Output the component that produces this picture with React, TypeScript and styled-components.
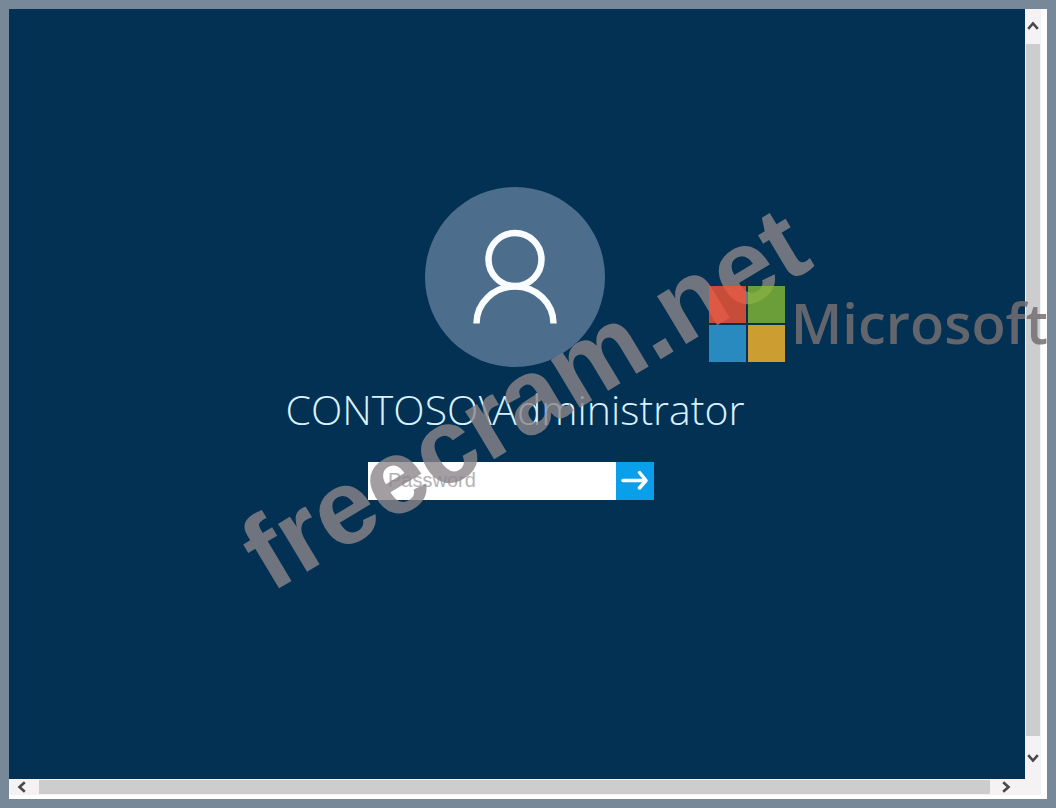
import React from 'react';
import styled, { createGlobalStyle } from 'styled-components';

const GlobalStyle = createGlobalStyle`
  *, *::before, *::after { box-sizing: border-box; }
  html, body, #root { height: 100%; }
  body { margin: 0; background: #778899; font-family: "Open Sans", sans-serif; }
`;

const Frame = styled.div`
  position: relative;
  height: 100%;
  padding: 9px;
  overflow: hidden;
`;

const Viewer = styled.div`
  display: grid;
  grid-template: 1fr 16px / 1fr 16px;
  height: 100%;
  padding: 0 6px 4px 0;
  background: #ffffff;
`;

const Desktop = styled.main`
  display: flex;
  flex-direction: column;
  align-items: center;
  justify-content: center;
  padding: 0 4px 101px 0;
  background: #033153;
`;

const Track = styled.div<{ $vertical?: boolean }>`
  display: flex;
  flex-direction: ${(p) => (p.$vertical ? 'column' : 'row')};
  grid-column: ${(p) => (p.$vertical ? 2 : 1)};
  background: #f4f2f3;
`;

const Thumb = styled.div`
  flex: 1;
  margin: 1px;
  background: #cdcdcd;
`;

const ArrowButton = styled.button<{ $vertical?: boolean; $length: number }>`
  display: grid;
  place-items: center;
  width: ${(p) => (p.$vertical ? 16 : p.$length)}px;
  height: ${(p) => (p.$vertical ? p.$length : 16)}px;
  padding: ${(p) => (p.$vertical ? '0' : '0 4px 0 0')};
  border: 0;
  background: none;
  color: #4b4649;
`;

const Corner = styled.div`
  background: #f4f2f3;
`;

const Avatar = styled.div`
  display: grid;
  place-items: center;
  width: 180px;
  height: 180px;
  border-radius: 50%;
  background: #4c6e8c;
`;

const UserName = styled.h1`
  margin: 15px 0 26px;
  color: #d9f1ff;
  font-size: 41px;
  font-weight: 300;
  line-height: 54px;
  white-space: nowrap;
`;

const PasswordForm = styled.form`
  display: flex;
  height: 38px;
  margin-right: 8px;
`;

const PasswordInput = styled.input`
  width: 248px;
  padding: 0 20px 2px;
  border: 0;
  background: #ffffff;
  color: #333333;
  font-family: "Liberation Sans", Arial, sans-serif;
  font-size: 20px;

  &::placeholder { color: #b4b4b4; opacity: 1; }
`;

const SubmitButton = styled.button`
  display: grid;
  place-items: center;
  width: 38px;
  padding: 0 0 2px;
  border: 0;
  background: #0a9fea;
  color: #ffffff;
`;

const Watermark = styled.div`
  position: absolute;
  inset: 0;
  display: grid;
  place-items: center;
  padding: 0 7px 12px 0;
  pointer-events: none;
`;

const WatermarkText = styled.span`
  color: rgba(139, 134, 137, 0.8);
  font-family: "Liberation Sans", Arial, sans-serif;
  font-size: 106px;
  font-weight: 700;
  line-height: 120px;
  transform: rotate(-31deg);
`;

const Brand = styled.div`
  position: absolute;
  top: 286px;
  right: 8px;
  display: flex;
  align-items: flex-start;
  gap: 6px;
  pointer-events: none;
`;

const BrandName = styled.span`
  color: rgba(115, 110, 112, 0.85);
  font-size: 56px;
  font-weight: 600;
  line-height: 72px;
`;

function Chevron({ turn }: { turn: number }) {
  return (
    <svg width="12" height="12" viewBox="0 0 12 12" fill="none" stroke="currentColor" strokeWidth="2.6" aria-hidden="true">
      <path d="M1.2 8.8 6 3.500l4.800 5.300" transform={`rotate(${turn} 6 6)`} />
    </svg>
  );
}

function PersonIcon() {
  return (
    <svg width="180" height="180" viewBox="0 0 180 180" fill="none" stroke="#f8fcff" strokeWidth="6.500" aria-hidden="true">
      <circle cx="90" cy="72.500" r="26.500" />
      <path d="M51.500 136.500a38.500 37 0 0 1 77 0" />
    </svg>
  );
}

function MicrosoftLogo() {
  return (
    <svg width="76" height="76" viewBox="0 0 76 76" opacity="0.8" aria-hidden="true">
      <path fill="#f95335" d="M0 0h37v37H0z" />
      <path fill="#86ba32" d="M39 0h37v37H39z" />
      <path fill="#32a1db" d="M0 39h37v37H0z" />
      <path fill="#ffba2b" d="M39 39h37v37H39z" />
    </svg>
  );
}

export default function App() {
  return (
    <Frame>
      <GlobalStyle />
      <Viewer>
        <Desktop>
          <Avatar><PersonIcon /></Avatar>
          <UserName>CONTOSO\Administrator</UserName>
          <PasswordForm onSubmit={(e) => e.preventDefault()}>
            <PasswordInput type="password" placeholder="Password" aria-label="Password" />
            <SubmitButton type="submit" aria-label="Sign in">
              <svg width="28" height="20" viewBox="0 0 28 20" fill="none" stroke="currentColor" strokeWidth="3.500" strokeLinecap="round" strokeLinejoin="round" aria-hidden="true">
                <path d="M2 10.500h22M18.500 2.500l6.500 8-6.500 7.500" />
              </svg>
            </SubmitButton>
          </PasswordForm>
        </Desktop>
        <Track $vertical>
          <ArrowButton $vertical $length={34} type="button" aria-label="Scroll up"><Chevron turn={0} /></ArrowButton>
          <Thumb />
          <ArrowButton $vertical $length={42} type="button" aria-label="Scroll down"><Chevron turn={180} /></ArrowButton>
        </Track>
        <Track>
          <ArrowButton $length={29} type="button" aria-label="Scroll left"><Chevron turn={-90} /></ArrowButton>
          <Thumb />
          <ArrowButton $length={34} type="button" aria-label="Scroll right"><Chevron turn={90} /></ArrowButton>
        </Track>
        <Corner />
      </Viewer>
      <Watermark><WatermarkText>freecram.net</WatermarkText></Watermark>
      <Brand>
        <MicrosoftLogo />
        <BrandName>Microsoft</BrandName>
      </Brand>
    </Frame>
  );
}
